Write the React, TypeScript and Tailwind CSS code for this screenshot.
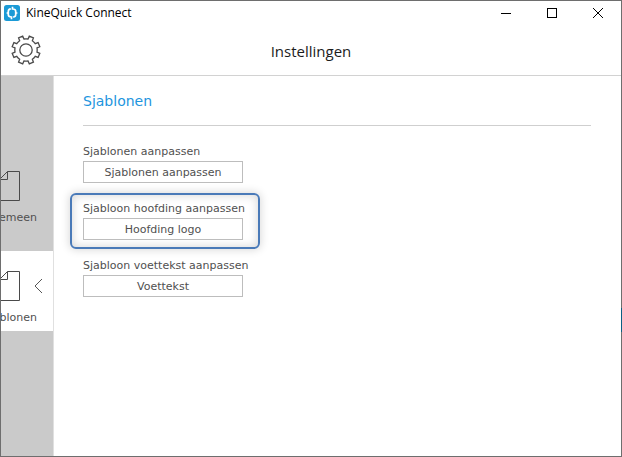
import clsx from 'clsx'

const templates = [
  { id: 'template', label: 'Sjablonen aanpassen', action: 'Sjablonen aanpassen' },
  { id: 'header', label: 'Sjabloon hoofding aanpassen', action: 'Hoofding logo', highlighted: true },
  { id: 'footer', label: 'Sjabloon voettekst aanpassen', action: 'Voettekst' },
]

const tabs = [
  { name: 'Algemeen', active: false },
  { name: 'Sjablonen', active: true },
]

// outline of a gear with eight teeth around (15, 15)
function gearPath() {
  const point = (radius: number, degrees: number) => {
    const angle = (degrees * Math.PI) / 180
    return `${(15 + radius * Math.cos(angle)).toFixed(2)} ${(15 + radius * Math.sin(angle)).toFixed(2)}`
  }
  let d = ''
  for (let i = 0; i < 8; i++) {
    const center = 22.5 + i * 45
    d += `${i === 0 ? 'M' : 'L'}${point(11.2, center - 12)}`
    d += `L${point(14.2, center - 9)}`
    d += `L${point(14.2, center + 9)}`
    d += `L${point(11.2, center + 12)}`
    d += `A11.2 11.2 0 0 1 ${point(11.2, center + 33)}`
  }
  return d + 'Z'
}

function Logo() {
  return (
    <svg width="16" height="16" viewBox="0 0 16 16" fill="none" aria-hidden="true">
      <rect width="16" height="16" rx="2.5" fill="#1b9ad6" />
      <path
        d="M6.8 3.9Q4.3 4.2 4.3 6.2V9.8Q4.3 12 7.5 12V14.3M9.2 12.1Q11.7 11.8 11.7 9.8V6.2Q11.7 4 8.5 4V1.7M2.6 8H4.3M11.7 8H13.4"
        stroke="#fff"
        strokeWidth="1.7"
      />
    </svg>
  )
}

function PageIcon() {
  return (
    <svg width="24" height="30" viewBox="0 0 24 30" fill="none" stroke="#4a4a4a" aria-hidden="true">
      <path d="M11.5 0.5H23.5V29.5H0.5V11.5Z" />
      <path d="M11.5 0.5V8.5H3.5" />
    </svg>
  )
}

function TitleBar() {
  return (
    <div className="flex h-6 items-center pl-[3px] font-['Open_Sans','Segoe_UI',sans-serif]">
      <Logo />
      <span className="ml-[6px] flex-1 text-[12px] leading-4 text-black">KineQuick Connect</span>
      <button type="button" aria-label="Minimaliseren" className="flex h-6 w-[46px] items-center justify-center">
        <svg width="10" height="10" stroke="#000" shapeRendering="crispEdges">
          <path d="M0 5.5H10" />
        </svg>
      </button>
      <button type="button" aria-label="Maximaliseren" className="flex h-6 w-[46px] items-center justify-center">
        <svg width="10" height="10" fill="none" stroke="#000" shapeRendering="crispEdges">
          <rect x="0.5" y="0.5" width="9" height="9" />
        </svg>
      </button>
      <button type="button" aria-label="Sluiten" className="flex h-6 w-[46px] items-center justify-center">
        <svg width="10" height="10" stroke="#000">
          <path d="M0 0L10 10M10 0L0 10" />
        </svg>
      </button>
    </div>
  )
}

function Header() {
  return (
    <header className="flex h-[51px] items-center border-b border-[#d2d2d2] pr-10 pl-[10px]">
      <button type="button" aria-label="Instellingen" className="w-[30px]">
        <svg width="30" height="30" viewBox="0 0 30 30" fill="none" stroke="#4a4a4a" strokeWidth="1.3">
          <path d={gearPath()} />
          <circle cx="15" cy="15" r="6.2" />
        </svg>
      </button>
      <h1 className="flex-1 pt-px text-center font-['Open_Sans','Segoe_UI',sans-serif] text-[15px] leading-5 text-[#1c1c1c]">
        Instellingen
      </h1>
    </header>
  )
}

function Sidebar() {
  return (
    <nav className="flex w-[53px] shrink-0 flex-col gap-5 overflow-hidden border-r border-[#e0e0e0] bg-[#cacaca] pt-[75px]">
      {tabs.map((tab) => (
        <button
          key={tab.name}
          type="button"
          aria-pressed={tab.active}
          className={clsx(
            'flex h-20 shrink-0 flex-col items-end pt-5 text-[11px] leading-4 text-[#505050]',
            tab.active && 'bg-white',
          )}
        >
          <span className="flex w-[57px] items-center justify-between pr-[10px]">
            <PageIcon />
            {tab.active && (
              <svg width="9" height="16" viewBox="0 0 9 16" fill="none" stroke="#555" aria-hidden="true">
                <path d="M8 1L1 8L8 15" />
              </svg>
            )}
          </span>
          <span className="mt-[9px] pr-4">{tab.name}</span>
        </button>
      ))}
    </nav>
  )
}

export default function App() {
  return (
    <div className="relative flex min-h-screen flex-col border border-[#6e6e6e] bg-white font-['DejaVu_Sans',Verdana,sans-serif]">
      <TitleBar />
      <Header />
      <div className="flex flex-1">
        <Sidebar />
        <main className="flex-1 pt-[15px] pr-[30px] pl-[29px]">
          <h2 className="border-b border-[#cfcfcf] pb-[14px] text-[14px] leading-5 text-[#1d95de]">Sjablonen</h2>
          <div className="mt-[18px] flex flex-col items-start gap-[18px]">
            {templates.map((template) => (
              <div key={template.id} className="relative">
                {template.highlighted && (
                  <div className="pointer-events-none absolute -top-2 -bottom-[9px] -left-[13px] w-[190px] rounded-md border-2 border-[#4a7ab8] shadow-[0_0_8px_1px_#00000026,inset_0_0_8px_1px_#00000026]" />
                )}
                <label htmlFor={template.id} className="block text-[11px] leading-4 whitespace-nowrap text-[#505050]">
                  {template.label}
                </label>
                <button
                  id={template.id}
                  type="button"
                  className="relative mt-px block h-[22px] w-40 border border-[#bdbdbd] bg-white pt-[2px] text-[11px] leading-4 text-[#505050]"
                >
                  {template.action}
                </button>
              </div>
            ))}
          </div>
        </main>
      </div>
      <div className="absolute top-[307px] -right-px h-6 w-px bg-[#0c5f83]" />
    </div>
  )
}
